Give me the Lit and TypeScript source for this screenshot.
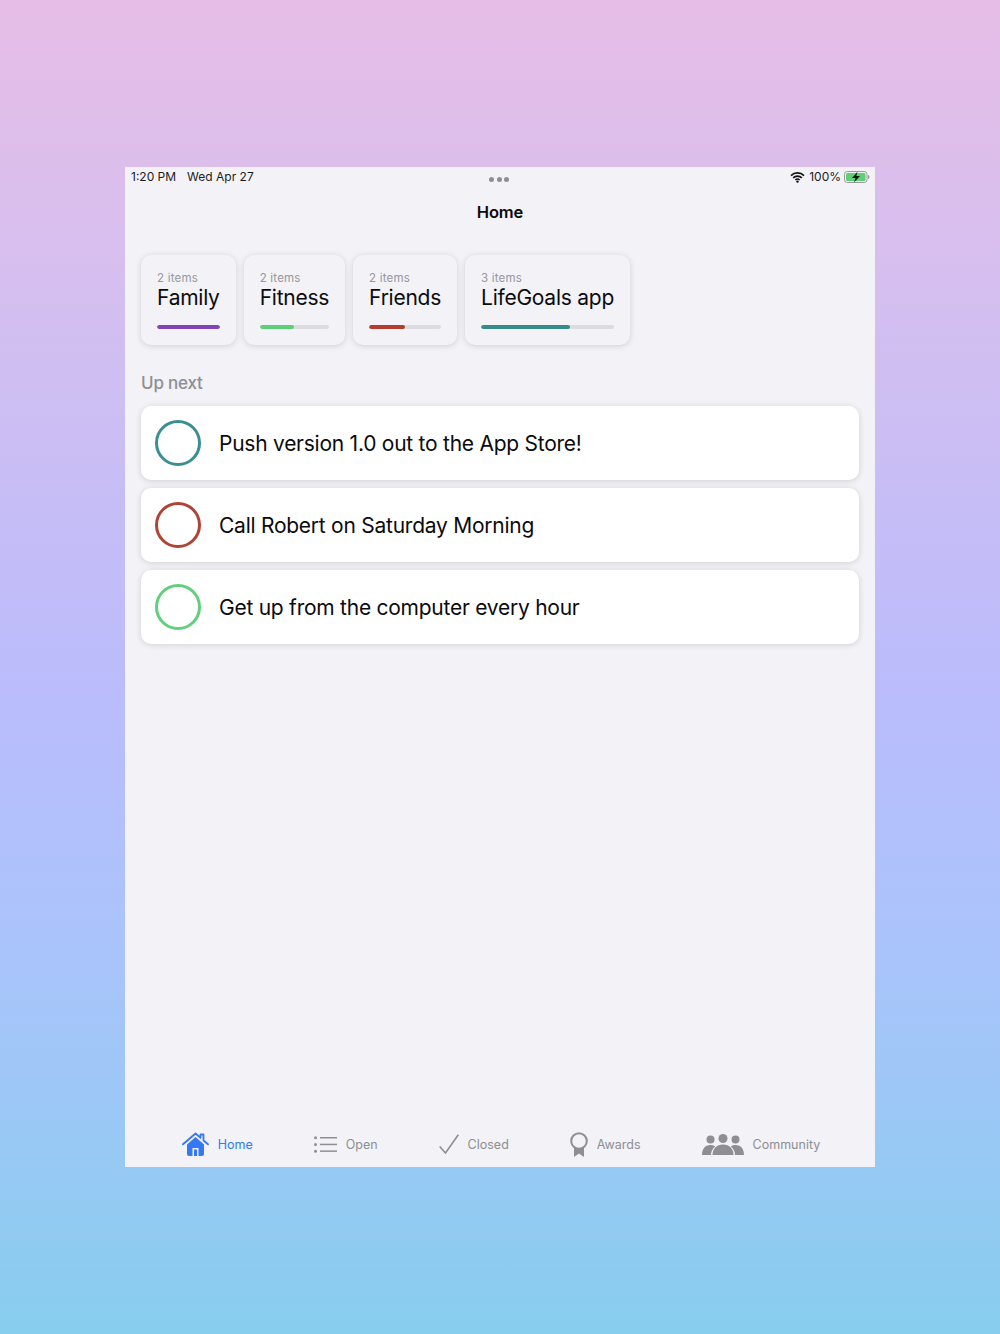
import { LitElement, html, css } from "lit";
import { customElement } from "lit/decorators.js";

const chips = [
  { n: "2 items", t: "Family", c: "#8344b5", p: 100 },
  { n: "2 items", t: "Fitness", c: "#5ccf78", p: 50 },
  { n: "2 items", t: "Friends", c: "#b33e2f", p: 50 },
  { n: "3 items", t: "LifeGoals app", c: "#358a8a", p: 67 },
];
const rows = [
  { t: "Push version 1.0 out to the App Store!", c: "#3a8f92" },
  { t: "Call Robert on Saturday Morning", c: "#b14236" },
  { t: "Get up from the computer every hour", c: "#62cf7d" },
];

@customElement("app-root")
export class AppRoot extends LitElement {
  static styles = css`
    :host {
      display: flex;
      align-items: center;
      justify-content: center;
      height: 1334px;
      background: linear-gradient(180deg, #e6bde6 0%, #d6bfef 20%, #bcbcfb 50%, #a9c4fb 72%, #87cdee 100%);
      font-family: Inter, "Liberation Sans", sans-serif;
      color: #0b0b0d;
    }
    .win {
      width: 750px;
      height: 1000px;
      background: #f2f2f7;
      display: flex;
      flex-direction: column;
      box-sizing: border-box;
    }
    .status {
      height: 20px;
      display: flex;
      align-items: center;
      justify-content: space-between;
      padding: 0 5px 0 6px;
      font-size: 12px;
      line-height: 20px;
      position: relative;
      color: #1c1c1e;
    }
    .status .left { display: flex; gap: 11px; }
    .status .right { display: flex; align-items: center; gap: 3px; }
    .dots {
      position: absolute;
      left: 364px;
      top: 10px;
      display: flex;
      gap: 2.5px;
    }
    .dots i { width: 5px; height: 5px; border-radius: 50%; background: #8e8e93; }
    .title {
      height: 49px;
      line-height: 50px;
      text-align: center;
      font-size: 16.5px;
      font-weight: 600;
      letter-spacing: -0.1px;
    }
    .chips {
      margin-top: 19px;
      padding: 0 16px;
      display: flex;
      gap: 8px;
    }
    .chip {
      height: 90px;
      box-sizing: border-box;
      padding: 16px 16px 0;
      background: #f2f2f7;
      border-radius: 10px;
      box-shadow: 0 1px 6px rgba(0, 0, 0, 0.14);
    }
    .chip .n { font-size: 11.5px; line-height: 14px; color: #97979c; letter-spacing: 0.2px; }
    .chip .t { font-size: 21px; line-height: 26px; letter-spacing: -0.25px; white-space: nowrap; }
    .track { margin-top: 14px; height: 4px; border-radius: 2px; background: #dcdce0; overflow: hidden; }
    .fill { height: 100%; border-radius: 2px; }
    .up {
      margin: 26px 16px 0;
      font-size: 17px;
      line-height: 24px;
      font-weight: 500;
      color: #8e8e93;
      letter-spacing: -0.2px;
    }
    .rows {
      margin: 11px 16px 0;
      display: flex;
      flex-direction: column;
      gap: 8px;
    }
    .row {
      height: 74px;
      box-sizing: border-box;
      padding: 0 14px;
      display: flex;
      align-items: center;
      gap: 18px;
      background: #fff;
      border-radius: 10px;
      box-shadow: 0 1px 6px rgba(0, 0, 0, 0.14);
    }
    .ring { width: 46px; height: 46px; box-sizing: border-box; border-radius: 50%; border: 3px solid; }
    .row span { font-size: 21px; letter-spacing: -0.25px; }
    .tabs {
      margin-top: auto;
      height: 46px;
      display: flex;
      align-items: center;
      justify-content: center;
      gap: 61px;
      padding-left: 2px;
      color: #8e8e93;
      font-size: 12.5px;
    }
    .tab { display: flex; align-items: center; gap: 9px; }
    .tab.on { color: #3478f6; }
    svg { display: block; }
  </style>
  `;

  render() {
    return html`
      <div class="win">
        <div class="status">
          <div class="left"><span>1:20 PM</span><span>Wed Apr 27</span></div>
          <div class="dots"><i></i><i></i><i></i></div>
          <div class="right">
            <svg width="15" height="11" viewBox="0 0 15 11" style="margin-right:1px">
              <path d="M1 3.6a9.2 9.2 0 0 1 13 0M3.2 5.9a6.1 6.1 0 0 1 8.6 0M5.4 8a3 3 0 0 1 4.2 0" fill="none" stroke="#111" stroke-width="1.6"/>
              <circle cx="7.5" cy="9.6" r="1.2" fill="#111"/>
            </svg>
            <span>100%</span>
            <svg width="26" height="12" viewBox="0 0 26 12">
              <rect x=".5" y=".5" width="22.5" height="11" rx="2.8" fill="none" stroke="#9a9a9e"/>
              <rect x="2" y="2" width="19.5" height="8" rx="1.5" fill="#5fcf76"/>
              <path d="M24 4v4c1-.3 1.5-1 1.5-2S25 4.300 24 4z" fill="#9a9a9e"/>
              <path d="M13.500 .8 8 7h3.500l-1.500 4.500L16 5h-3.700z" fill="#111"/>
            </svg>
          </div>
        </div>
        <div class="title">Home</div>
        <div class="chips">
          ${chips.map(
            (c) => html`<div class="chip">
              <div class="n">${c.n}</div>
              <div class="t">${c.t}</div>
              <div class="track"><div class="fill" style="width:${c.p}%;background:${c.c}"></div></div>
            </div>`
          )}
        </div>
        <div class="up">Up next</div>
        <div class="rows">
          ${rows.map(
            (r) => html`<div class="row">
              <div class="ring" style="border-color:${r.c}"></div>
              <span>${r.t}</span>
            </div>`
          )}
        </div>
        <div class="tabs">
          <div class="tab on">
            <svg width="27" height="24" viewBox="0 0 27 24" fill="#3478f6">
              <path d="M5 12.500 13.500 5 22 12.500V22a2 2 0 0 1-2 2h-3.500v-8h-6v8H7a2 2 0 0 1-2-2z"/>
              <rect x="12" y="17.500" width="3" height="6.500" fill="#3478f6"/>
              <path d="M1 12.300 13.500 1.500l5 4.300V2.500h3v6l4.500 3.800" fill="none" stroke="#3478f6" stroke-width="1.800" stroke-linecap="round" stroke-linejoin="round"/>
            </svg>
            <span>Home</span>
          </div>
          <div class="tab">
            <svg width="23" height="17" viewBox="0 0 23 17" fill="#8e8e93">
              <circle cx="1.500" cy="1.800" r="1.500"/><circle cx="1.500" cy="8.500" r="1.500"/><circle cx="1.500" cy="15.200" r="1.500"/>
              <rect x="6" y="1" width="17" height="1.500"/><rect x="6" y="7.700" width="17" height="1.500"/><rect x="6" y="14.400" width="17" height="1.500"/>
            </svg>
            <span>Open</span>
          </div>
          <div class="tab">
            <svg width="20" height="20" viewBox="0 0 20 20">
              <path d="M.7 12.500 6.500 19 19.300.7" fill="none" stroke="#8e8e93" stroke-width="1.600"/>
            </svg>
            <span>Closed</span>
          </div>
          <div class="tab">
            <svg width="18" height="25" viewBox="0 0 18 25" fill="#8e8e93">
              <path d="M4 15v10l5-3.500 5 3.500V15z"/>
              <circle cx="9" cy="9" r="7.800" fill="#f2f2f7" stroke="#8e8e93" stroke-width="2"/>
            </svg>
            <span>Awards</span>
          </div>
          <div class="tab">
            <svg width="42" height="21" viewBox="0 0 42 21" fill="#8e8e93">
              <circle cx="8.500" cy="5.500" r="4"/><circle cx="33.500" cy="5.500" r="4"/><circle cx="21" cy="4.500" r="4.500"/>
              <path d="M0 21c0-6 3-10 8.500-10 2 0 3.500.5 4.700 1.500C10.500 14.500 9 17.500 9 21z"/>
              <path d="M42 21c0-6-3-10-8.500-10-2 0-3.500.5-4.700 1.500 2.700 2 4.200 5 4.200 8.500z"/>
              <path d="M10.500 21c0-6 4-10.500 10.500-10.500S31.500 15 31.500 21z"/>
            </svg>
            <span>Community</span>
          </div>
        </div>
      </div>
    `;
  }
}
